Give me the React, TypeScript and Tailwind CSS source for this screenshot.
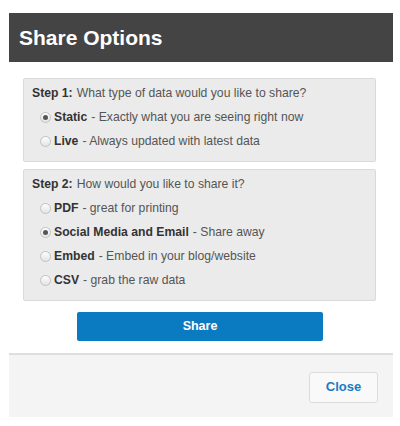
import React, { useState } from 'react'

type Option = { id: string; label: string; desc: string }

const stepOne: Option[] = [
  { id: 'static', label: 'Static', desc: 'Exactly what you are seeing right now' },
  { id: 'live', label: 'Live', desc: 'Always updated with latest data' },
]

const stepTwo: Option[] = [
  { id: 'pdf', label: 'PDF', desc: 'great for printing' },
  { id: 'social', label: 'Social Media and Email', desc: 'Share away' },
  { id: 'embed', label: 'Embed', desc: 'Embed in your blog/website' },
  { id: 'csv', label: 'CSV', desc: 'grab the raw data' },
]

function Radio({ checked }: { checked: boolean }) {
  return (
    <span className="w-[11px] h-[11px] rounded-full border border-[#c2c2c2] bg-gradient-to-b from-[#fdfdfd] to-[#e4e4e4] flex items-center justify-center shrink-0">
      {checked && <span className="w-[5px] h-[5px] rounded-full bg-[#555]" />}
    </span>
  )
}

function StepBox({
  step,
  question,
  options,
  value,
  onChange,
}: {
  step: string
  question: string
  options: Option[]
  value: string
  onChange: (v: string) => void
}) {
  return (
    <div className="bg-[#ebebeb] border border-[#dadada] rounded-[2px] pl-2 pt-[2px] pb-2">
      <div className="h-6 flex items-center text-[#555]">
        <span className="font-bold text-[#333]">{step}:</span>
        <span className="ml-[4px]">{question}</span>
      </div>
      {options.map((o) => (
        <div
          key={o.id}
          onClick={() => onChange(o.id)}
          className="h-6 flex items-center pl-2 cursor-pointer"
        >
          <Radio checked={value === o.id} />
          <span className="ml-[3px] font-bold text-[#333]">{o.label}</span>
          <span className="ml-[4px] text-[#555]">- {o.desc}</span>
        </div>
      ))}
    </div>
  )
}

export default function App() {
  const [kind, setKind] = useState('static')
  const [via, setVia] = useState('social')

  return (
    <div className="w-[400px] h-[426px] bg-white pt-[13px] pl-[9px] font-['Liberation_Sans',Arial,sans-serif] text-[12.2px]">
      <div className="w-[384px] flex flex-col">
        {/* header */}
        <div className="h-[49px] bg-[#444444] flex items-center pl-[10px]">
          <h2 className="text-white font-bold text-[21px]">Share Options</h2>
        </div>

        {/* body */}
        <div className="pt-4 pl-[14px] pr-[17px] flex flex-col gap-[7px]">
          <StepBox
            step="Step 1"
            question="What type of data would you like to share?"
            options={stepOne}
            value={kind}
            onChange={setKind}
          />
          <StepBox
            step="Step 2"
            question="How would you like to share it?"
            options={stepTwo}
            value={via}
            onChange={setVia}
          />
        </div>
        <div className="flex justify-center pt-[11px] pb-[12px] pr-[2px]">
          <button className="w-[246px] h-[29px] bg-[#0a7bc1] rounded-[2px] text-white font-bold text-[12.5px]">
            Share
          </button>
        </div>

        {/* footer */}
        <div className="h-[64px] bg-[#f4f4f4] border-t-2 border-[#dedede] flex items-center justify-end pr-[15px] pt-[2px]">
          <button className="w-[69px] h-[31px] bg-[#f9f9f9] border border-[#dcdcdc] rounded-[3px] text-[#1a7cc4] font-bold text-[13px]">
            Close
          </button>
        </div>
      </div>
    </div>
  )
}
